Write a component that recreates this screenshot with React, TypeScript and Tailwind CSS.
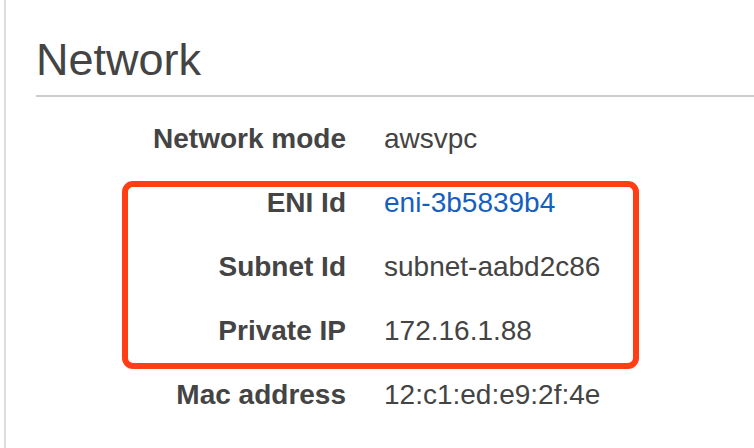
const rows = [
  { label: 'Network mode', value: 'awsvpc' },
  { label: 'ENI Id', value: 'eni-3b5839b4', link: true },
  { label: 'Subnet Id', value: 'subnet-aabd2c86' },
  { label: 'Private IP', value: '172.16.1.88' },
  { label: 'Mac address', value: '12:c1:ed:e9:2f:4e' },
]

export default function App() {
  return (
    <div className="relative h-[448px] w-[754px] overflow-hidden bg-white font-['Liberation_Sans',Arial,sans-serif] text-[#444]">
      <div className="ml-[4px] h-full border-l-2 border-[#dddddd] pl-[30px]">
        <h2 className="border-b-2 border-[#cccccc] pb-[13px] pt-[37px] text-[45px] font-normal leading-none">
          Network
        </h2>
        <div className="mt-[10px]">
          {rows.map((r) => (
            <div key={r.label} className="flex h-[64px] items-center text-[28px] leading-[64px]">
              <div className="w-[310px] shrink-0 text-right font-bold">{r.label}</div>
              <div className={`ml-[38px] ${r.link ? 'text-[#155fbe]' : ''}`}>{r.value}</div>
            </div>
          ))}
        </div>
      </div>
      <div className="pointer-events-none absolute left-[122px] top-[181px] h-[188px] w-[517px] rounded-[11px] border-[6px] border-[#ff3e14]" />
    </div>
  )
}
